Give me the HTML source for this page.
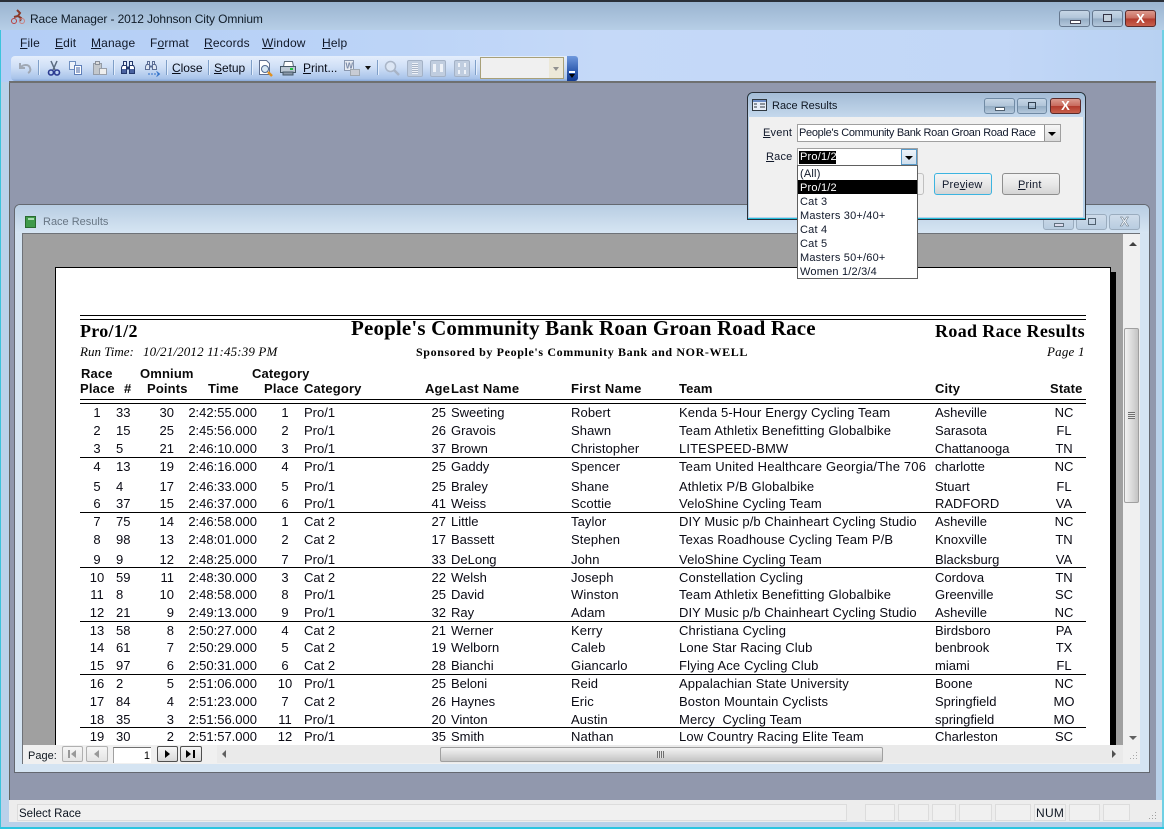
<!DOCTYPE html>
<html><head><meta charset="utf-8"><style>
html,body{margin:0;padding:0}
body{width:1164px;height:829px;overflow:hidden;position:relative;background:#b9d1ea;font:12px "Liberation Sans",sans-serif;color:#000}
div,span,svg{position:absolute;white-space:nowrap}
u{text-decoration:underline}
.t{line-height:14px;font-size:11px;color:#101820}
.m{top:36px;line-height:14px;font-size:12px;letter-spacing:.15px;color:#101828}
.tb{top:61px;letter-spacing:-.05px;color:#080c18}
.wb{border:1px solid #66788f;border-radius:3px;background:linear-gradient(#c6d6e6 0,#b0c4d8 50%,#94acc4 51%,#b4c8dc 100%);box-sizing:border-box}
.wc{border:1px solid #5a2a2a;border-radius:3px;background:linear-gradient(#dc9a8e 0,#c86a5c 50%,#b23a2c 51%,#c8604c 100%);box-sizing:border-box}
.sep{width:1px;height:15px;top:60px;background:#7f9fc8;border-right:1px solid #e4eefc}
.h{font-weight:bold;font-size:13px;line-height:14px;color:#0a0a0a;letter-spacing:.15px}
.rw{left:0;width:1164px;height:16px;line-height:14px;font-size:13px;color:#0a0a14}
.rw span{top:1px}
.a{left:80px;width:34px;text-align:center}
.b{left:116px}
.c{left:140px;width:34px;text-align:right}
.d{left:180px;width:77px;text-align:right}
.e{left:270px;width:30px;text-align:center}
.f{left:304px}
.g{left:420px;width:26px;text-align:right}
.i{left:451px}
.j{left:571px;letter-spacing:.1px}
.k{left:679px;letter-spacing:.13px}
.l{left:935px}
.n{left:1046px;width:36px;text-align:center}
.ln{left:80px;width:1006px;height:1px;background:#000}
.dd{left:800px;line-height:14px;font-size:11px;letter-spacing:.2px;color:#10182a}
.pane{top:804px;height:17px;border:1px solid #dcdcdc;box-sizing:border-box;background:#f0f0f0}
</style></head><body>
<!-- outer frame -->
<div style="left:0;top:0;width:1164px;height:2px;background:#2a2f38"></div>
<div style="left:0;top:2px;width:1164px;height:28px;background:linear-gradient(#9ab4d0,#b6cee6)"></div>
<div style="left:0;top:30px;width:1164px;height:52px;background:linear-gradient(90deg,#b4cef6 0,#bcd4f7 400px,#c5d9f8 600px,#c2d7f7 1000px,#b8d1f2 100%)"></div>
<div style="left:0;top:30px;width:1px;height:799px;background:#3cc4dc"></div>
<div style="left:1162px;top:30px;width:2px;height:799px;background:#6fd0e4"></div>
<div style="left:0;top:827px;width:1164px;height:2px;background:#2cc5e0"></div>
<svg style="left:10px;top:9px" width="20" height="18" viewBox="0 0 20 18"><path d="M7 1l3 3-2 3 3 2-1 3M4 8l4-1" stroke="#8a3a2a" stroke-width="2" fill="none"/><circle cx="4" cy="12" r="2.500" fill="none" stroke="#b84040"/><circle cx="12" cy="12" r="2.500" fill="none" stroke="#c88080"/></svg>
<div class="t" style="left:30px;top:12px;font-size:12px;letter-spacing:-.12px;color:#101c28">Race Manager - 2012 Johnson City Omnium</div>
<div class="wb" style="left:1059px;top:10px;width:31px;height:17px"><div style="left:10px;top:9px;width:9px;height:2px;background:#fff;border:1px solid #445"></div></div>
<div class="wb" style="left:1092px;top:10px;width:31px;height:17px"><div style="left:10px;top:3px;width:7px;height:6px;background:#c4d0dc;border:1px solid #334"></div></div>
<div class="wc" style="left:1125px;top:10px;width:31px;height:17px"><div style="left:0;width:29px;top:0;text-align:center;color:#fff;font:bold 13px/15px 'Liberation Sans',sans-serif">X</div></div>
<!-- menu -->
<div class="m" style="left:20px"><u>F</u>ile</div>
<div class="m" style="left:55px"><u>E</u>dit</div>
<div class="m" style="left:91px"><u>M</u>anage</div>
<div class="m" style="left:150px">F<u>o</u>rmat</div>
<div class="m" style="left:204px"><u>R</u>ecords</div>
<div class="m" style="left:262px"><u>W</u>indow</div>
<div class="m" style="left:322px"><u>H</u>elp</div>
<!-- toolbar -->
<div style="left:11px;top:56px;width:556px;height:25px;border-radius:4px 0 0 4px;background:linear-gradient(#e4eefc,#cfdff6 45%,#a9c4ea 90%,#88a8d8)"></div>
<div style="left:567px;top:56px;width:11px;height:25px;border-radius:0 3px 3px 0;background:linear-gradient(#6f98dc,#2f5cb0 60%,#123a90)"></div>
<div style="left:569px;top:71px;width:6px;height:2px;background:#fff"></div>
<div style="left:569px;top:74px;width:0;height:0;border:3px solid transparent;border-top:4px solid #000"></div>
<svg style="left:17px;top:60px" width="16" height="16" viewBox="0 0 16 16"><path d="M3 3v5h5M3 8c3-4 9-4 10 0 1 2 0 4-2 5" stroke="#a0a8b4" stroke-width="2" fill="none"/></svg>
<div class="sep" style="left:38px"></div>
<svg style="left:47px;top:60px" width="14" height="16" viewBox="0 0 14 16"><path d="M4 1l4 9M10 1L6 10" stroke="#5a6a80" stroke-width="1.500" fill="none"/><circle cx="4" cy="12.500" r="2.500" fill="none" stroke="#2a3a90" stroke-width="1.600"/><circle cx="10" cy="12.500" r="2.500" fill="none" stroke="#2a3a90" stroke-width="1.600"/></svg>
<svg style="left:68px;top:61px" width="16" height="15" viewBox="0 0 16 15"><path d="M1.500 .5h6v8h-6z" fill="#eef3fb" stroke="#6f8fc0"/><path d="M6.500 4.500h7v9h-7z" fill="#fff" stroke="#5f7fb8"/><path d="M8 7h4M8 9h4M8 11h4" stroke="#4060a0"/></svg>
<svg style="left:92px;top:60px" width="16" height="16" viewBox="0 0 16 16"><path d="M1.500 3.500h8v11h-8z" fill="#c4c8cc" stroke="#949ca8"/><path d="M3.500 1.500h4v3h-4z" fill="#ddd" stroke="#8a909a"/><path d="M7.500 8.500h7v6h-7z" fill="#eee" stroke="#9aa0aa"/></svg>
<div class="sep" style="left:113px"></div>
<svg style="left:120px;top:60px" width="16" height="15" viewBox="0 0 16 15"><path d="M3.500 1.500h3v4h-3zM9.500 1.500h3v4h-3z" fill="#e8eef8" stroke="#24386c"/><path d="M2.500 5.500h4v8h-5v-6zM9.500 5.500h4l1 2v6h-5z" fill="#fff" stroke="#24386c"/><path d="M6.500 6.500h3v3h-3z" fill="#24386c"/><path d="M2 9h4v4H2zM10 9h4v4h-4z" fill="#4a62a0"/></svg>
<svg style="left:144px;top:60px" width="17" height="17" viewBox="0 0 17 17"><path d="M3.500 1.500h2v3h-2zM8.500 1.500h2v3h-2z" fill="#e0e8f4" stroke="#5a6c94"/><path d="M2.500 4.500h3v5h-4v-3zM8.500 4.500h3l1 2v3h-4z" fill="#dfe7f3" stroke="#5a6c94"/><path d="M5.500 5.500h3v2h-3z" fill="#5a6c94"/><path d="M4 14h11" stroke="#3070c8" stroke-dasharray="2 1"/><path d="M12.500 11.500l3 2.500-3 2.500" stroke="#3070c8" fill="none"/></svg>
<div class="sep" style="left:166px"></div>
<div class="m tb" style="left:172px"><u>C</u>lose</div>
<div class="sep" style="left:208px"></div>
<div class="m tb" style="left:214px"><u>S</u>etup</div>
<div class="sep" style="left:251px"></div>
<svg style="left:258px;top:60px" width="16" height="17" viewBox="0 0 16 17"><path d="M1.500 .5h7l3 3v11h-10z" fill="#fff" stroke="#607090"/><circle cx="7" cy="9" r="3.500" fill="#d8e8f4" stroke="#506890"/><path d="M10 12l4 4" stroke="#e09020" stroke-width="2.500"/></svg>
<svg style="left:280px;top:61px" width="16" height="15" viewBox="0 0 16 15"><path d="M4.500 .5h8l1 5h-10z" fill="#fff" stroke="#5a6a7a"/><rect x=".5" y="5.500" width="15" height="6" fill="#bcc8d4" stroke="#465868"/><rect x="3" y="11" width="10" height="3" fill="#8a98a8" stroke="#465868"/><rect x="10" y="7" width="3" height="2" fill="#20c040"/></svg>
<div class="m tb" style="left:303px"><u>P</u>rint...</div>
<svg style="left:344px;top:60px" width="16" height="16" viewBox="0 0 16 16"><rect x=".5" y=".5" width="9" height="10" fill="#e8ecf2" stroke="#8a98b0"/><text x="1.500" y="8.500" font-size="8" font-weight="bold" fill="#7a8aa8" font-family="Liberation Sans">W</text><path d="M6.500 9.500h9v6h-9z" fill="#c8ccd4" stroke="#a0a8b0"/></svg>
<div style="left:365px;top:66px;width:0;height:0;border:3px solid transparent;border-top:4px solid #101010"></div>
<div class="sep" style="left:377px"></div>
<svg style="left:384px;top:60px" width="16" height="16" viewBox="0 0 16 16"><circle cx="6.500" cy="6.500" r="5" fill="#dce6f4" stroke="#aab6c8" stroke-width="1.500"/><path d="M10 10l5 5" stroke="#a8b4c6" stroke-width="2.500"/></svg>
<div style="left:407px;top:60px;width:14px;height:15px;background:#c0cddf;border:1px solid #a4b2c6;border-radius:2px"><div style="left:4px;top:2px;width:6px;height:11px;background:repeating-linear-gradient(#eef2f8 0 1px,#a8b4c6 1px 2px)"></div></div>
<div style="left:430px;top:60px;width:14px;height:15px;background:#c0cddf;border:1px solid #a4b2c6;border-radius:2px"><div style="left:2px;top:3px;width:3px;height:8px;background:#eef2f8"></div><div style="left:9px;top:3px;width:3px;height:8px;background:#eef2f8"></div></div>
<div style="left:454px;top:60px;width:14px;height:15px;background:#c0cddf;border:1px solid #a4b2c6;border-radius:2px"><div style="left:3px;top:2px;width:2px;height:4px;background:#eef2f8"></div><div style="left:9px;top:2px;width:2px;height:4px;background:#eef2f8"></div><div style="left:3px;top:9px;width:2px;height:4px;background:#eef2f8"></div><div style="left:9px;top:9px;width:2px;height:4px;background:#eef2f8"></div></div>
<div class="sep" style="left:475px"></div>
<div style="left:480px;top:57px;width:84px;height:22px;box-sizing:border-box;background:#f0f0f0;border:1px solid #a8a078"><div style="left:68px;top:0;width:14px;height:20px;background:#ece8d8"></div><div style="left:72px;top:9px;width:0;height:0;border:3px solid transparent;border-top:4px solid #909090"></div></div>
<!-- MDI -->
<div style="left:9px;top:81px;width:1147px;height:719px;box-sizing:border-box;background:#9198ad;border-top:1px solid #6e6e6e;border-left:1px solid #646464"></div>
<div style="left:9px;top:81px;width:1147px;height:2px;background:#6e7070"></div>
<!-- status -->
<div style="left:9px;top:800px;width:1147px;height:22px;background:#ededed"></div>
<div style="left:1156px;top:800px;width:6px;height:22px;background:#ededed"></div>
<div class="pane" style="left:17px;width:830px"></div>
<div class="dd" style="left:19px;top:807px;font-size:11.500px;letter-spacing:0;color:#0c1420">Select Race</div>
<div class="pane" style="left:865px;width:30px"></div>
<div class="pane" style="left:898px;width:31px"></div>
<div class="pane" style="left:932px;width:24px"></div>
<div class="pane" style="left:959px;width:33px"></div>
<div class="pane" style="left:995px;width:36px"></div>
<div class="pane" style="left:1034px;width:32px"></div>
<div class="dd" style="left:1036px;top:806px;font-size:12px;letter-spacing:.3px;color:#101824">NUM</div>
<div class="pane" style="left:1069px;width:31px"></div>
<div class="pane" style="left:1103px;width:27px"></div>
<svg style="left:1146px;top:810px" width="12" height="12" viewBox="0 0 12 12"><path d="M9 2h1v1H9zM6 5h1v1H6zM9 5h1v1H9zM3 8h1v1H3zM6 8h1v1H6zM9 8h1v1H9z" fill="#a0a0a0"/></svg>
<!-- child window -->
<div style="left:14px;top:204px;width:1136px;height:569px;box-sizing:border-box;border:1px solid #646870;border-radius:6px 6px 0 0;background:#d5e4f2"></div>
<div style="left:15px;top:205px;width:1134px;height:28px;border-radius:5px 5px 0 0;background:linear-gradient(#b8cde2,#d6e5f3)"></div>
<svg style="left:25px;top:216px" width="12" height="12" viewBox="0 0 12 12"><rect x=".5" y=".5" width="10" height="11" fill="#3f9a4a" stroke="#2a6a30"/><rect x="3" y="2" width="6" height="2" fill="#a8dcb0"/></svg>
<div class="t" style="left:43px;top:215px;color:#687684">Race Results</div>
<div class="wb" style="left:1043px;top:214px;width:31px;height:16px;background:linear-gradient(#cfdcea,#b8cce0);border-color:#9aacbe"><div style="left:10px;top:8px;width:8px;height:2px;border:1px solid #60707f;background:#dde"></div></div>
<div class="wb" style="left:1076px;top:214px;width:31px;height:16px;background:linear-gradient(#cfdcea,#b8cce0);border-color:#9aacbe"><div style="left:11px;top:3px;width:6px;height:5px;border:1px solid #50606f"></div></div>
<div class="wb" style="left:1109px;top:214px;width:31px;height:16px;background:linear-gradient(#cfdcea,#b8cce0);border-color:#9aacbe"><div style="left:0;width:29px;top:0;text-align:center;font:bold 13px/14px 'Liberation Sans',sans-serif;color:#f4f8fc;-webkit-text-stroke:.5px #60707f">X</div></div>
<div style="left:22px;top:233px;width:1118px;height:531px;background:#f0f0f0;border-top:1px solid #6e7278;border-left:1px solid #6e7278;box-sizing:border-box"></div>
<div style="left:23px;top:234px;width:1100px;height:511px;background:#a0a0a0"></div>
<!-- page -->
<div style="left:1111px;top:272px;width:5px;height:473px;background:#000"></div>
<div style="left:55px;top:267px;width:1056px;height:478px;background:#fff;border:1px solid #000;border-bottom:0;box-sizing:border-box"></div>
<!-- report -->
<div class="ln" style="top:315px"></div><div class="ln" style="top:319px"></div>
<div class="ln" style="top:399px"></div><div class="ln" style="top:403px"></div>
<div style="left:80px;top:321px;font:bold 18px/20px 'Liberation Serif',serif;letter-spacing:.3px;color:#000">Pro/1/2</div>
<div style="left:351px;top:317px;font:bold 21px/22px 'Liberation Serif',serif;letter-spacing:.15px;color:#000">People's Community Bank Roan Groan Road Race</div>
<div style="left:935px;top:321px;font:bold 18px/20px 'Liberation Serif',serif;letter-spacing:.35px;color:#000">Road Race Results</div>
<div style="left:80px;top:345px;font:italic 13px/14px 'Liberation Serif',serif">Run Time:</div>
<div style="left:143px;top:345px;font:italic 13px/14px 'Liberation Serif',serif;letter-spacing:.15px">10/21/2012 11:45:39 PM</div>
<div style="left:416px;top:345px;font:bold 12px/14px 'Liberation Serif',serif;letter-spacing:.63px">Sponsored by People's Community Bank and NOR-WELL</div>
<div style="left:1047px;top:345px;font:italic 13px/14px 'Liberation Serif',serif;letter-spacing:.2px">Page 1</div>
<div class="h" style="left:81px;top:367px">Race</div>
<div class="h" style="left:140px;top:367px">Omnium</div>
<div class="h" style="left:252px;top:367px">Category</div>
<div class="h" style="left:80px;top:382px">Place</div>
<div class="h" style="left:124px;top:382px">#</div>
<div class="h" style="left:147px;top:382px">Points</div>
<div class="h" style="left:208px;top:382px">Time</div>
<div class="h" style="left:264px;top:382px">Place</div>
<div class="h" style="left:304px;top:382px">Category</div>
<div class="h" style="left:425px;top:382px">Age</div>
<div class="h" style="left:451px;top:382px;letter-spacing:.3px">Last Name</div>
<div class="h" style="left:571px;top:382px;letter-spacing:.35px">First Name</div>
<div class="h" style="left:679px;top:382px">Team</div>
<div class="h" style="left:935px;top:382px">City</div>
<div class="h" style="left:1050px;top:382px">State</div>
<div class="rw" style="top:405px"><span class="a">1</span><span class="b">33</span><span class="c">30</span><span class="d">2:42:55.000</span><span class="e">1</span><span class="f">Pro/1</span><span class="g">25</span><span class="i">Sweeting</span><span class="j">Robert</span><span class="k">Kenda 5-Hour Energy Cycling Team</span><span class="l">Asheville</span><span class="n">NC</span></div>
<div class="rw" style="top:423px"><span class="a">2</span><span class="b">15</span><span class="c">25</span><span class="d">2:45:56.000</span><span class="e">2</span><span class="f">Pro/1</span><span class="g">26</span><span class="i">Gravois</span><span class="j">Shawn</span><span class="k">Team Athletix Benefitting Globalbike</span><span class="l">Sarasota</span><span class="n">FL</span></div>
<div class="rw" style="top:441px"><span class="a">3</span><span class="b">5</span><span class="c">21</span><span class="d">2:46:10.000</span><span class="e">3</span><span class="f">Pro/1</span><span class="g">37</span><span class="i">Brown</span><span class="j">Christopher</span><span class="k">LITESPEED-BMW</span><span class="l">Chattanooga</span><span class="n">TN</span></div>
<div class="ln" style="top:457px"></div>
<div class="rw" style="top:459px"><span class="a">4</span><span class="b">13</span><span class="c">19</span><span class="d">2:46:16.000</span><span class="e">4</span><span class="f">Pro/1</span><span class="g">25</span><span class="i">Gaddy</span><span class="j">Spencer</span><span class="k" style="letter-spacing:.17px">Team United Healthcare Georgia/The 706</span><span class="l">charlotte</span><span class="n">NC</span></div>
<div class="rw" style="top:479px"><span class="a">5</span><span class="b">4</span><span class="c">17</span><span class="d">2:46:33.000</span><span class="e">5</span><span class="f">Pro/1</span><span class="g">25</span><span class="i">Braley</span><span class="j">Shane</span><span class="k">Athletix P/B Globalbike</span><span class="l">Stuart</span><span class="n">FL</span></div>
<div class="rw" style="top:496px"><span class="a">6</span><span class="b">37</span><span class="c">15</span><span class="d">2:46:37.000</span><span class="e">6</span><span class="f">Pro/1</span><span class="g">41</span><span class="i">Weiss</span><span class="j">Scottie</span><span class="k">VeloShine Cycling Team</span><span class="l">RADFORD</span><span class="n">VA</span></div>
<div class="ln" style="top:512px"></div>
<div class="rw" style="top:514px"><span class="a">7</span><span class="b">75</span><span class="c">14</span><span class="d">2:46:58.000</span><span class="e">1</span><span class="f">Cat 2</span><span class="g">27</span><span class="i">Little</span><span class="j">Taylor</span><span class="k" style="letter-spacing:.08px">DIY Music p/b Chainheart Cycling Studio</span><span class="l">Asheville</span><span class="n">NC</span></div>
<div class="rw" style="top:532px"><span class="a">8</span><span class="b">98</span><span class="c">13</span><span class="d">2:48:01.000</span><span class="e">2</span><span class="f">Cat 2</span><span class="g">17</span><span class="i">Bassett</span><span class="j">Stephen</span><span class="k">Texas Roadhouse Cycling Team P/B</span><span class="l">Knoxville</span><span class="n">TN</span></div>
<div class="rw" style="top:552px"><span class="a">9</span><span class="b">9</span><span class="c">12</span><span class="d">2:48:25.000</span><span class="e">7</span><span class="f">Pro/1</span><span class="g">33</span><span class="i">DeLong</span><span class="j">John</span><span class="k">VeloShine Cycling Team</span><span class="l">Blacksburg</span><span class="n">VA</span></div>
<div class="ln" style="top:567px"></div>
<div class="rw" style="top:570px"><span class="a">10</span><span class="b">59</span><span class="c">11</span><span class="d">2:48:30.000</span><span class="e">3</span><span class="f">Cat 2</span><span class="g">22</span><span class="i">Welsh</span><span class="j">Joseph</span><span class="k">Constellation Cycling</span><span class="l">Cordova</span><span class="n">TN</span></div>
<div class="rw" style="top:587px"><span class="a">11</span><span class="b">8</span><span class="c">10</span><span class="d">2:48:58.000</span><span class="e">8</span><span class="f">Pro/1</span><span class="g">25</span><span class="i">David</span><span class="j">Winston</span><span class="k">Team Athletix Benefitting Globalbike</span><span class="l">Greenville</span><span class="n">SC</span></div>
<div class="rw" style="top:605px"><span class="a">12</span><span class="b">21</span><span class="c">9</span><span class="d">2:49:13.000</span><span class="e">9</span><span class="f">Pro/1</span><span class="g">32</span><span class="i">Ray</span><span class="j">Adam</span><span class="k" style="letter-spacing:.08px">DIY Music p/b Chainheart Cycling Studio</span><span class="l">Asheville</span><span class="n">NC</span></div>
<div class="ln" style="top:621px"></div>
<div class="rw" style="top:623px"><span class="a">13</span><span class="b">58</span><span class="c">8</span><span class="d">2:50:27.000</span><span class="e">4</span><span class="f">Cat 2</span><span class="g">21</span><span class="i">Werner</span><span class="j">Kerry</span><span class="k">Christiana Cycling</span><span class="l">Birdsboro</span><span class="n">PA</span></div>
<div class="rw" style="top:640px"><span class="a">14</span><span class="b">61</span><span class="c">7</span><span class="d">2:50:29.000</span><span class="e">5</span><span class="f">Cat 2</span><span class="g">19</span><span class="i">Welborn</span><span class="j">Caleb</span><span class="k">Lone Star Racing Club</span><span class="l">benbrook</span><span class="n">TX</span></div>
<div class="rw" style="top:658px"><span class="a">15</span><span class="b">97</span><span class="c">6</span><span class="d">2:50:31.000</span><span class="e">6</span><span class="f">Cat 2</span><span class="g">28</span><span class="i">Bianchi</span><span class="j">Giancarlo</span><span class="k">Flying Ace Cycling Club</span><span class="l">miami</span><span class="n">FL</span></div>
<div class="ln" style="top:674px"></div>
<div class="rw" style="top:676px"><span class="a">16</span><span class="b">2</span><span class="c">5</span><span class="d">2:51:06.000</span><span class="e">10</span><span class="f">Pro/1</span><span class="g">25</span><span class="i">Beloni</span><span class="j">Reid</span><span class="k">Appalachian State University</span><span class="l">Boone</span><span class="n">NC</span></div>
<div class="rw" style="top:694px"><span class="a">17</span><span class="b">84</span><span class="c">4</span><span class="d">2:51:23.000</span><span class="e">7</span><span class="f">Cat 2</span><span class="g">26</span><span class="i">Haynes</span><span class="j">Eric</span><span class="k">Boston Mountain Cyclists</span><span class="l">Springfield</span><span class="n">MO</span></div>
<div class="rw" style="top:712px"><span class="a">18</span><span class="b">35</span><span class="c">3</span><span class="d">2:51:56.000</span><span class="e">11</span><span class="f">Pro/1</span><span class="g">20</span><span class="i">Vinton</span><span class="j">Austin</span><span class="k">Mercy &nbsp;Cycling Team</span><span class="l">springfield</span><span class="n">MO</span></div>
<div class="ln" style="top:727px"></div>
<div class="rw" style="top:729px"><span class="a">19</span><span class="b">30</span><span class="c">2</span><span class="d">2:51:57.000</span><span class="e">12</span><span class="f">Pro/1</span><span class="g">35</span><span class="i">Smith</span><span class="j">Nathan</span><span class="k">Low Country Racing Elite Team</span><span class="l">Charleston</span><span class="n">SC</span></div>
<!-- vertical scrollbar -->
<div style="left:1123px;top:234px;width:17px;height:511px;background:#f0f0f0"></div>
<div style="left:1129px;top:242px;width:0;height:0;border:4px solid transparent;border-bottom:4px solid #404040;border-top:0"></div>
<div style="left:1129px;top:736px;width:0;height:0;border:4px solid transparent;border-top:4px solid #606060;border-bottom:0"></div>
<div style="left:1124px;top:328px;width:15px;height:175px;box-sizing:border-box;border:1px solid #a0a0a0;border-radius:2px;background:linear-gradient(90deg,#f2f2f2,#dcdcdc 50%,#c4c4c4)"></div>
<div style="left:1128px;top:412px;width:7px;height:7px;background:repeating-linear-gradient(#707070 0 1px,#e4e4e4 1px 2px)"></div>
<!-- nav -->
<div style="left:23px;top:745px;width:1117px;height:18px;background:#f0f0f0"></div>
<div class="dd" style="left:28px;top:749px;letter-spacing:0;color:#101820">Page:</div>
<div style="left:62px;top:746px;width:21px;height:16px;box-sizing:border-box;border:1px solid #b0b0b0;border-radius:2px;background:linear-gradient(#f6f6f6,#e4e4e4)"><div style="left:5px;top:3px;width:2px;height:8px;background:#999"></div><div style="left:8px;top:3px;width:0;height:0;border:4px solid transparent;border-right:5px solid #999;border-left:0"></div></div>
<div style="left:86px;top:746px;width:22px;height:16px;box-sizing:border-box;border:1px solid #b0b0b0;border-radius:2px;background:linear-gradient(#f6f6f6,#e4e4e4)"><div style="left:7px;top:3px;width:0;height:0;border:4px solid transparent;border-right:5px solid #999;border-left:0"></div></div>
<div style="left:113px;top:747px;width:38px;height:16px;box-sizing:border-box;background:#fff;border-top:1px solid #707070;border-left:1px solid #a0a0a0;text-align:right;line-height:17px;padding-right:1px;font-size:11px">1</div>
<div style="left:157px;top:746px;width:21px;height:16px;box-sizing:border-box;border:1px solid #505050;border-radius:2px;background:linear-gradient(#f6f6f6,#d8d8d8)"><div style="left:7px;top:3px;width:0;height:0;border:4px solid transparent;border-left:5px solid #000;border-right:0"></div></div>
<div style="left:180px;top:746px;width:22px;height:16px;box-sizing:border-box;border:1px solid #505050;border-radius:2px;background:linear-gradient(#f6f6f6,#d8d8d8)"><div style="left:5px;top:3px;width:0;height:0;border:4px solid transparent;border-left:5px solid #000;border-right:0"></div><div style="left:12px;top:3px;width:2px;height:8px;background:#000"></div></div>
<div style="left:217px;top:745px;width:906px;height:18px;background:#eaeaea"></div>
<div style="left:222px;top:750px;width:0;height:0;border:4px solid transparent;border-right:4px solid #606060;border-left:0"></div>
<div style="left:1112px;top:750px;width:0;height:0;border:4px solid transparent;border-left:4px solid #505050;border-right:0"></div>
<div style="left:440px;top:747px;width:443px;height:15px;box-sizing:border-box;border:1px solid #a0a0a0;border-radius:2px;background:linear-gradient(#f2f2f2,#dcdcdc 50%,#c4c4c4)"></div>
<div style="left:657px;top:751px;width:7px;height:7px;background:repeating-linear-gradient(90deg,#707070 0 1px,#e4e4e4 1px 2px)"></div>
<svg style="left:1127px;top:750px" width="12" height="12" viewBox="0 0 12 12"><path d="M9 2h1v1H9zM6 5h1v1H6zM9 5h1v1H9zM3 8h1v1H3zM6 8h1v1H6zM9 8h1v1H9z" fill="#a8a8a8"/></svg>
<!-- dialog -->
<div style="left:747px;top:92px;width:339px;height:128px;box-sizing:border-box;border:1px solid #2a3038;border-radius:6px 6px 0 0;background:#25c0dc"></div>
<div style="left:748px;top:93px;width:337px;height:24px;border-radius:5px 5px 0 0;background:linear-gradient(#a4bcd6,#c4d8ec)"></div>
<div style="left:748px;top:117px;width:337px;height:101px;background:#b8d2ea"></div>
<div style="left:749px;top:117px;width:334px;height:100px;background:#f0f0f0"></div>
<svg style="left:752px;top:99px" width="15" height="12" viewBox="0 0 15 12"><rect x=".5" y=".5" width="14" height="11" fill="#e8eef8" stroke="#303840"/><rect x="1" y="1" width="13" height="2" fill="#6c8cc4"/><path d="M2 5h3M2 8h3M8 5h5M8 8h5" stroke="#303840"/></svg>
<div class="t" style="left:772px;top:99px;color:#101824">Race Results</div>
<div class="wb" style="left:984px;top:98px;width:31px;height:16px;border-color:#708aa4"><div style="left:10px;top:8px;width:8px;height:2px;border:1px solid #506070;background:#fff"></div></div>
<div class="wb" style="left:1017px;top:98px;width:30px;height:16px;border-color:#708aa4"><div style="left:10px;top:3px;width:6px;height:5px;border:1px solid #304050"></div></div>
<div class="wc" style="left:1050px;top:98px;width:31px;height:16px"><div style="left:0;width:29px;top:0;text-align:center;color:#fff;font:bold 13px/14px 'Liberation Sans',sans-serif">X</div></div>
<div class="dd" style="left:763px;top:126px"><u>E</u>vent</div>
<div class="dd" style="left:766px;top:150px"><u>R</u>ace</div>
<div style="left:797px;top:124px;width:264px;height:18px;box-sizing:border-box;background:#fff;border:1px solid #a0a0a0"><div class="dd" style="left:1px;top:1px;letter-spacing:-.3px">People's Community Bank Roan Groan Road Race</div><div style="left:246px;top:0;width:16px;height:16px;background:linear-gradient(#f6f6f6,#dadada);border-left:1px solid #909090;box-sizing:border-box"><div style="left:3px;top:7px;width:0;height:0;border:4px solid transparent;border-top:4px solid #000"></div></div></div>
<div style="left:797px;top:148px;width:121px;height:18px;box-sizing:border-box;background:#fff;border:1px solid #a0a0a0"><div style="left:1px;top:2px;width:37px;height:13px;background:#000"></div><div class="dd" style="left:2px;top:1px;color:#fff">Pro/1/2</div><div style="left:103px;top:0;width:16px;height:16px;box-sizing:border-box;background:linear-gradient(#eef4fa,#cfdfee);border:1px solid #5a9ac8"><div style="left:3px;top:6px;width:0;height:0;border:4px solid transparent;border-top:4px solid #000"></div></div></div>
<div style="left:880px;top:173px;width:44px;height:22px;box-sizing:border-box;background:#f0f0f0;border:1px solid #c0c0c0;border-radius:3px"></div>
<div style="left:934px;top:173px;width:58px;height:22px;box-sizing:border-box;border:1px solid #3cb4e0;border-radius:3px;background:linear-gradient(#f4f4f4,#e8e8e8 50%,#d4d4d4)"><div class="dd" style="left:7px;top:4px">Pre<u>v</u>iew</div></div>
<div style="left:1002px;top:173px;width:58px;height:22px;box-sizing:border-box;border:1px solid #8e8e8e;border-radius:3px;background:linear-gradient(#f4f4f4,#e8e8e8 50%,#d4d4d4)"><div class="dd" style="left:15px;top:4px"><u>P</u>rint</div></div>
<!-- dropdown -->
<div style="left:797px;top:165px;width:121px;height:114px;box-sizing:border-box;background:#fff;border:1px solid #606060"></div>
<div style="left:798px;top:180px;width:119px;height:14px;background:#000"></div>
<div class="dd" style="top:167px">(All)</div>
<div class="dd" style="top:181px;color:#fff">Pro/1/2</div>
<div class="dd" style="top:195px">Cat 3</div>
<div class="dd" style="top:209px">Masters 30+/40+</div>
<div class="dd" style="top:223px">Cat 4</div>
<div class="dd" style="top:237px">Cat 5</div>
<div class="dd" style="top:251px">Masters 50+/60+</div>
<div class="dd" style="top:265px">Women 1/2/3/4</div>
</body></html>
